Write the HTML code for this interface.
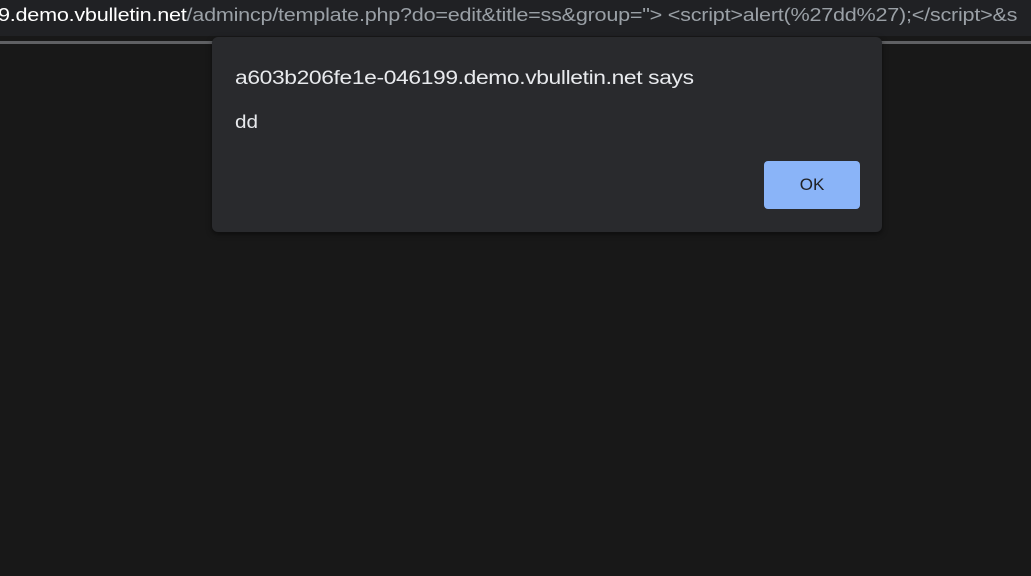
<!DOCTYPE html>
<html><head><style>
html,body{margin:0;padding:0;width:1031px;height:576px;overflow:hidden;background:#181818;font-family:"Liberation Sans",sans-serif}
.bar{position:absolute;left:0;top:0;width:1031px;height:36px;background:#202124;overflow:hidden}
.url{position:absolute;left:-2px;top:5px;font-size:18px;white-space:nowrap;color:#9aa0a6;letter-spacing:-0.2px;transform:scaleX(1.2);transform-origin:0 0}
.url b{font-weight:normal;color:#fff}
.line{position:absolute;left:0;top:41px;width:1031px;height:3px;background:#5f6063}
.dlg{position:absolute;left:212px;top:37px;width:670px;height:195px;background:#292a2d;border-radius:6px;box-shadow:0 2px 6px rgba(0,0,0,.5)}
.t{position:absolute;left:23px;top:31px;font-size:19px;color:#e8eaed;letter-spacing:-0.3px;white-space:nowrap;transform:scaleX(1.2);transform-origin:0 0}
.m{position:absolute;left:23px;top:75px;font-size:18px;color:#e8eaed;transform:scaleX(1.15);transform-origin:0 0}
.ok{position:absolute;left:552px;top:124px;width:96px;height:48px;background:#8ab4f8;border-radius:4px;color:#202124;font-size:17px;text-align:center;line-height:48px}
</style></head><body>
<div class="bar"><div class="url"><b>9.demo.vbulletin.net</b>/admincp/template.php?do=edit&amp;title=ss&amp;group="&gt; &lt;script&gt;alert(%27dd%27);&lt;/script&gt;&amp;s</div></div>
<div class="line"></div>
<div class="dlg"><div class="t">a603b206fe1e-046199.demo.vbulletin.net says</div><div class="m">dd</div><div class="ok">OK</div></div>
</body></html>
